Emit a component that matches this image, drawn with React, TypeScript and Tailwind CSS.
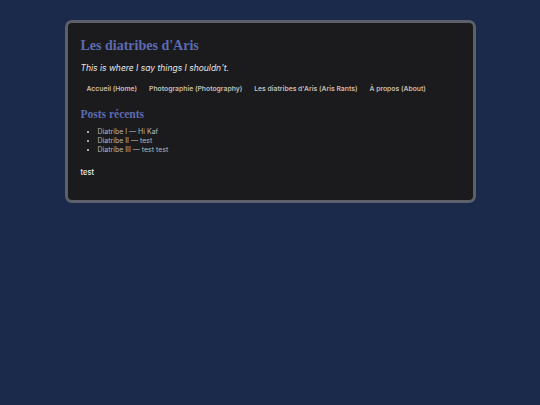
import React from "react";

const navLinks = [
  "Accueil (Home)",
  "Photographie (Photography)",
  "Les diatribes d'Aris (Aris Rants)",
  "À propos (About)",
];

const posts = ["Diatribe I — Hi Kaf", "Diatribe II — test", "Diatribe III — test test"];

export default function App() {
  return (
    <div className="min-h-[405px] w-full bg-[#1b2a4a] pt-[20px] font-['Inter',sans-serif]">
      <div className="mx-auto w-[411px] rounded-[7px] border-[3px] border-[#5b606b] bg-[#1b1b1d] px-[13px] pt-[13px] pb-[22px]">
        {/* Header */}
        <h1 className="font-['Liberation_Serif',serif] text-[14px] leading-[20px] font-bold text-[#5d6bb2]">
          Les diatribes d'Aris
        </h1>
        <p className="mt-[6px] text-[8.5px] leading-[12px] italic text-[#e6e6e6]">
          This is where I say things I shouldn't.
        </p>

        <nav className="mt-[9px] flex">
          {navLinks.map((link) => (
            <a
              key={link}
              href="#"
              className="whitespace-nowrap px-[6px] text-[6.8px] leading-[12px] font-semibold text-[#c4beb3]"
            >
              {link}
            </a>
          ))}
        </nav>

        {/* Recent posts */}
        <h2 className="mt-[12px] font-['Liberation_Serif',serif] text-[11.5px] leading-[14px] font-bold text-[#5d6bb2]">
          Posts récents
        </h2>
        <ul className="mt-[6px] list-disc pl-[17px] text-[7px] leading-[9px] text-[#bab7b0] marker:text-[#d8d8d8]">
          {posts.map((p) => (
            <li key={p}>{p}</li>
          ))}
        </ul>

        <p className="mt-[14px] text-[7.5px] leading-[10px] font-medium text-[#ececec]">test</p>
      </div>
    </div>
  );
}
